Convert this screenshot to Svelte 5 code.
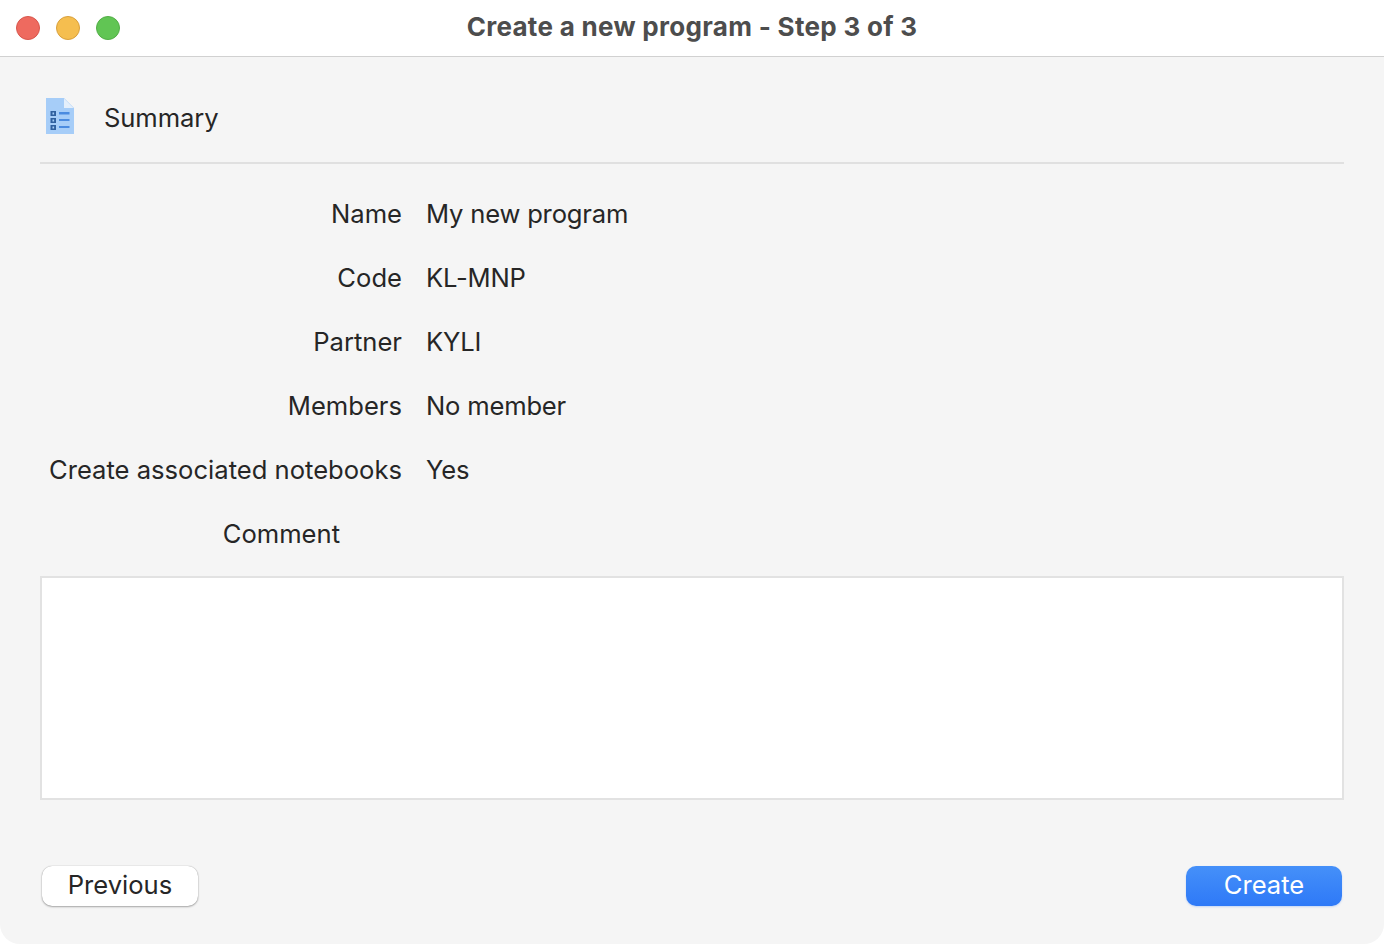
<script lang="ts">
  const rows = [
    { label: 'Name', value: 'My new program' },
    { label: 'Code', value: 'KL-MNP' },
    { label: 'Partner', value: 'KYLI' },
    { label: 'Members', value: 'No member' },
    { label: 'Create associated notebooks', value: 'Yes' }
  ];
</script>

<div class="window">
  <header class="titlebar">
    <div class="traffic">
      <span class="dot red"></span>
      <span class="dot yellow"></span>
      <span class="dot green"></span>
    </div>
    <h1 class="title">Create a new program - Step 3 of 3</h1>
  </header>

  <main class="content">
    <div class="section-head">
      <svg class="doc-icon" width="28" height="36" viewBox="0 0 28 36">
        <path d="M0 0H18L28 10V36H0Z" fill="#a6cdf8"/>
        <path d="M18 0.5L27.5 10H18Z" fill="#e4effb"/>
        <g fill="#30609f">
          <rect x="4.5" y="13" width="5.5" height="5"/>
          <rect x="4.5" y="20" width="5.5" height="5"/>
          <rect x="4.5" y="27" width="5.5" height="5"/>
        </g>
        <g fill="#a6cdf8">
          <rect x="6.5" y="14.5" width="1.6" height="2"/>
          <rect x="6.5" y="21.5" width="1.6" height="2"/>
          <rect x="6.5" y="28.5" width="1.6" height="2"/>
        </g>
        <g fill="#4a8be0">
          <rect x="13" y="14" width="10.5" height="2.5"/>
          <rect x="13" y="21" width="10.5" height="2"/>
          <rect x="13" y="28" width="10.5" height="2"/>
        </g>
      </svg>
      <span class="section-title">Summary</span>
    </div>

    <div class="summary">
      {#each rows as row}
        <div class="row">
          <span class="label">{row.label}</span>
          <span class="value">{row.value}</span>
        </div>
      {/each}
    </div>

    <div class="comment-label">Comment</div>
    <div class="comment-box"></div>

    <footer class="actions">
      <button class="btn">Previous</button>
      <button class="btn primary">Create</button>
    </footer>
  </main>
</div>

<style>
  :global(body) {
    margin: 0;
    background: #fff;
  }

  .window {
    width: 1384px;
    height: 944px;
    display: flex;
    flex-direction: column;
    font-family: Inter, "Liberation Sans", sans-serif;
    color: #262626;
    overflow: hidden;
  }

  .titlebar {
    height: 57px;
    box-sizing: border-box;
    flex-shrink: 0;
    position: relative;
    display: flex;
    align-items: center;
    justify-content: center;
    padding-bottom: 3px;
    background: #fff;
    border-bottom: 1px solid #d1d1d1;
  }

  .traffic {
    position: absolute;
    left: 16px;
    top: 16px;
    display: flex;
    gap: 16px;
  }

  .dot {
    width: 24px;
    height: 24px;
    box-sizing: border-box;
    border-radius: 50%;
    border: 1px solid;
  }

  .red { background: #ee6a5f; border-color: #d8564c; }
  .yellow { background: #f5be4f; border-color: #d9a03c; }
  .green { background: #61c554; border-color: #52ae46; }

  .title {
    margin: 0;
    font-size: 26px;
    font-weight: 700;
    letter-spacing: 0.3px;
    color: #4d4d4d;
  }

  .content {
    flex: 1;
    background: #f5f5f5;
    border-radius: 0 0 20px 20px;
    padding: 0 40px;
    display: flex;
    flex-direction: column;
  }

  .section-head {
    height: 107px;
    box-sizing: border-box;
    padding: 41px 0 0 6px;
    display: flex;
    align-items: flex-start;
    border-bottom: 2px solid #e0e0e0;
  }

  .doc-icon {
    flex-shrink: 0;
  }

  .section-title {
    margin-left: 30px;
    font-size: 25.6px;
    letter-spacing: -0.1px;
    line-height: 40px;
  }

  .summary {
    padding-top: 17px;
  }

  .row {
    display: flex;
    height: 64px;
    align-items: center;
    font-size: 25.6px;
  }

  .label {
    width: 362px;
    text-align: right;
  }

  .value {
    margin-left: 24px;
    letter-spacing: -0.2px;
  }

  .comment-label {
    width: 300px;
    height: 66px;
    line-height: 66px;
    text-align: right;
    font-size: 25.6px;
  }

  .comment-box {
    height: 224px;
    box-sizing: border-box;
    margin-top: 9px;
    background: #fff;
    border: 2px solid #e2e2e2;
  }

  .actions {
    display: flex;
    justify-content: space-between;
    padding: 66px 2px 0;
  }

  .btn {
    width: 156px;
    height: 40px;
    padding: 0 0 4px;
    border: none;
    border-radius: 10px;
    background: #fff;
    color: #262626;
    font-family: inherit;
    font-size: 25.6px;
    box-shadow: 0 0 1px rgba(0, 0, 0, 0.35), 0 1px 2px rgba(0, 0, 0, 0.3);
  }

  .primary {
    background: linear-gradient(#4590f9, #2e79f7);
    color: #fff;
    box-shadow: 0 1px 2px rgba(46, 121, 247, 0.25);
  }
</style>
